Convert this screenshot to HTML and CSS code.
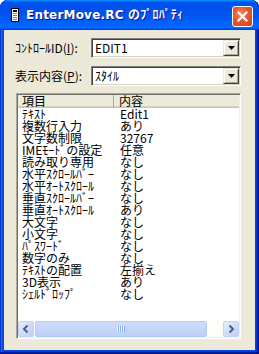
FILE: index.html
```html
<!DOCTYPE html>
<html lang="ja">
<head>
<meta charset="utf-8">
<title>EnterMove.RC のﾌﾟﾛﾊﾟﾃｨ</title>
<link rel="stylesheet" href="styles.css">
</head>
<body>
<div class="window">
  <div class="titlebar">
    <svg class="ticon" width="8" height="14" viewBox="0 0 8 14">
      <rect x="0.5" y="0.5" width="7" height="13" fill="#fff" stroke="#000"/>
      <rect x="2" y="2" width="4" height="2" fill="#000"/>
      <rect x="2" y="5" width="4" height="1" fill="#808080"/>
      <rect x="2" y="7" width="4" height="1" fill="#808080"/>
      <rect x="2" y="9" width="4" height="1" fill="#808080"/>
      <rect x="2" y="11" width="4" height="1" fill="#808080"/>
    </svg>
    <span class="ttext">EnterMove.RC のﾌﾟﾛﾊﾟﾃｨ</span>
    <div class="close">
      <svg width="19" height="19" viewBox="0 0 19 19"><path d="M5.5 5.5 L13.5 13.5 M13.5 5.5 L5.5 13.5" stroke="#fff" stroke-width="2.2" stroke-linecap="square"/></svg>
    </div>
  </div>
  <div class="client">
    <div class="field">
      <span class="label">ｺﾝﾄﾛｰﾙID(<u>I</u>):</span>
      <div class="combo"><span class="ctext">EDIT1</span><div class="dd"><svg width="7" height="4" viewBox="0 0 7 4"><path d="M0 0 H7 L3.5 4 Z" fill="#000"/></svg></div></div>
    </div>
    <div class="field">
      <span class="label">表示内容(<u>P</u>):</span>
      <div class="combo"><span class="ctext">ｽﾀｲﾙ</span><div class="dd"><svg width="7" height="4" viewBox="0 0 7 4"><path d="M0 0 H7 L3.5 4 Z" fill="#000"/></svg></div></div>
    </div>
    <div class="list">
      <div class="lhead"><div class="c1">項目</div><div class="c2">内容</div></div>
      <div class="rows">
        <div class="row"><div class="c1">ﾃｷｽﾄ</div><div class="c2">Edit1</div></div>
        <div class="row"><div class="c1">複数行入力</div><div class="c2">あり</div></div>
        <div class="row"><div class="c1">文字数制限</div><div class="c2">32767</div></div>
        <div class="row"><div class="c1">IMEﾓｰﾄﾞの設定</div><div class="c2">任意</div></div>
        <div class="row"><div class="c1">読み取り専用</div><div class="c2">なし</div></div>
        <div class="row"><div class="c1">水平ｽｸﾛｰﾙﾊﾞｰ</div><div class="c2">なし</div></div>
        <div class="row"><div class="c1">水平ｵｰﾄｽｸﾛｰﾙ</div><div class="c2">なし</div></div>
        <div class="row"><div class="c1">垂直ｽｸﾛｰﾙﾊﾞｰ</div><div class="c2">なし</div></div>
        <div class="row"><div class="c1">垂直ｵｰﾄｽｸﾛｰﾙ</div><div class="c2">あり</div></div>
        <div class="row"><div class="c1">大文字</div><div class="c2">なし</div></div>
        <div class="row"><div class="c1">小文字</div><div class="c2">なし</div></div>
        <div class="row"><div class="c1">ﾊﾟｽﾜｰﾄﾞ</div><div class="c2">なし</div></div>
        <div class="row"><div class="c1">数字のみ</div><div class="c2">なし</div></div>
        <div class="row"><div class="c1">ﾃｷｽﾄの配置</div><div class="c2">左揃え</div></div>
        <div class="row"><div class="c1">3D表示</div><div class="c2">あり</div></div>
        <div class="row"><div class="c1">ｼｪﾙﾄﾞﾛｯﾌﾟ</div><div class="c2">なし</div></div>
      </div>
      <div class="hscroll">
        <div class="sbtn"><svg width="16" height="16" viewBox="0 0 16 16"><path d="M9.5 4.5 L6 8 L9.5 11.5" fill="none" stroke="#4D6185" stroke-width="2"/></svg></div>
        <div class="track">
          <div class="thumb"><svg width="8" height="6" viewBox="0 0 8 6"><path d="M0.5 0 V6 M2.5 0 V6 M4.5 0 V6 M6.5 0 V6" stroke="#EEF4FE" stroke-width="1"/><path d="M1.5 0 V6 M3.5 0 V6 M5.5 0 V6 M7.5 0 V6" stroke="#8CB0F8" stroke-width="1"/></svg></div>
        </div>
        <div class="sbtn"><svg width="16" height="16" viewBox="0 0 16 16"><path d="M6.5 4.5 L10 8 L6.5 11.5" fill="none" stroke="#4D6185" stroke-width="2"/></svg></div>
      </div>
    </div>
  </div>
</div>
</body>
</html>
```
FILE: styles.css
```css
html, body {
  margin: 0;
  padding: 0;
  background: #ffffff;
}

body {
  font-family: "Noto Sans CJK JP", "DejaVu Sans", sans-serif;
  font-size: 12px;
  color: #000;
}

.window {
  width: 259px;
  height: 354px;
  box-sizing: border-box;
  display: flex;
  flex-direction: column;
  background: #0846E0;
  border-radius: 8px 8px 0 0;
  box-shadow: inset -1px -1px #00138c, inset 1px 1px #0831d9, inset -2px -2px #001ea0, inset 2px 2px #166aee, inset -3px -3px #003bda, inset 3px 3px #0855dd;
  overflow: hidden;
}

.titlebar {
  height: 30px;
  flex: none;
  display: flex;
  align-items: flex-start;
  padding: 0 6px 0 11px;
  box-sizing: border-box;
  border-radius: 8px 8px 0 0;
  background: linear-gradient(180deg, #0997ff, #0053ee 8%, #0050ee 40%, #0066ff 88%, #0066ff 93%, #005bff 95%, #003dd7 96%, #003dd7);
}

.ticon {
  margin-top: 8px;
  margin-right: 7px;
  flex: none;
}

.ttext {
  margin-top: 7px;
  font-family: "DejaVu Sans", "Noto Sans CJK JP", sans-serif;
  font-weight: bold;
  font-size: 12px;
  line-height: 16px;
  color: #fff;
  letter-spacing: 0.2px;
  text-shadow: 1px 1px #0f1089;
  white-space: nowrap;
}

.close {
  margin-left: auto;
  margin-top: 6px;
  width: 21px;
  height: 21px;
  box-sizing: border-box;
  border: 1px solid #fff;
  border-radius: 3px;
  background: radial-gradient(circle at 40% 35%, #EE8A6A 0%, #E2582F 45%, #D2401A 100%);
  display: flex;
  align-items: center;
  justify-content: center;
}

.client {
  flex: 1;
  margin: 0 4px 4px 4px;
  background: #ECE9D8;
  padding: 8px 14px 0 12px;
  display: flex;
  flex-direction: column;
}

.field {
  display: grid;
  grid-template-columns: 75px 150px;
  align-items: center;
  margin-bottom: 8px;
}

.field + .field {
  margin-bottom: 7px;
}

.label {
  white-space: nowrap;
  margin-left: -1px;
  line-height: 14px;
}

.combo {
  height: 20px;
  box-sizing: border-box;
  background: #fff;
  border-style: solid;
  border-width: 1px;
  border-color: #808080 #ffffff #ffffff #808080;
  box-shadow: inset 1px 1px #404040, inset -1px -1px #D4D0C8;
  display: flex;
  align-items: center;
  padding: 1px;
}

.ctext {
  flex: 1;
  padding-left: 2px;
  line-height: 14px;
}

.dd {
  width: 16px;
  height: 16px;
  box-sizing: border-box;
  background: #ECE9D8;
  border-style: solid;
  border-width: 1px;
  border-color: #ECE9D8 #404040 #404040 #ECE9D8;
  box-shadow: inset 1px 1px #ffffff, inset -1px -1px #ACA899;
  display: flex;
  align-items: center;
  justify-content: center;
}

.list {
  height: 246px;
  box-sizing: border-box;
  background: #fff;
  border-style: solid;
  border-width: 1px;
  border-color: #ACA899 #ffffff #ffffff #ACA899;
  box-shadow: inset 1px 1px #716F64, inset -1px -1px #F1EFE2;
  padding: 1px;
  display: flex;
  flex-direction: column;
}

.lhead {
  height: 13px;
  flex: none;
  display: flex;
  background: #EBEADB;
  box-shadow: inset 0 -1px #CBC7B8, inset 0 -2px #D6D2C2;
  line-height: 12px;
}

.lhead .c1 {
  border-right: 1px solid #ACA899;
  width: 96px;
}

.c1 {
  width: 97px;
  flex: none;
  padding-left: 4px;
  box-sizing: border-box;
  white-space: nowrap;
}

.c2 {
  padding-left: 5px;
  white-space: nowrap;
}

.rows {
  flex: 1;
}

.row {
  display: flex;
  height: 12px;
  line-height: 12px;
}

.hscroll {
  height: 16px;
  flex: none;
  display: flex;
  background: #FEFEFB;
}

.sbtn {
  width: 16px;
  height: 16px;
  box-sizing: border-box;
  border: 1px solid #C3D3FD;
  border-radius: 2px;
  background: linear-gradient(135deg, #E6EEFC, #BBCEF6);
  display: flex;
  align-items: center;
  justify-content: center;
}

.sbtn svg {
  margin: -1px;
}

.track {
  flex: 1;
  display: flex;
  padding-left: 1px;
}

.thumb {
  width: 172px;
  height: 16px;
  box-sizing: border-box;
  border: 1px solid #B5CBF6;
  border-radius: 2px;
  background: linear-gradient(180deg, #CFDCFB, #BCD0F8);
  display: flex;
  align-items: center;
  justify-content: center;
}
```
